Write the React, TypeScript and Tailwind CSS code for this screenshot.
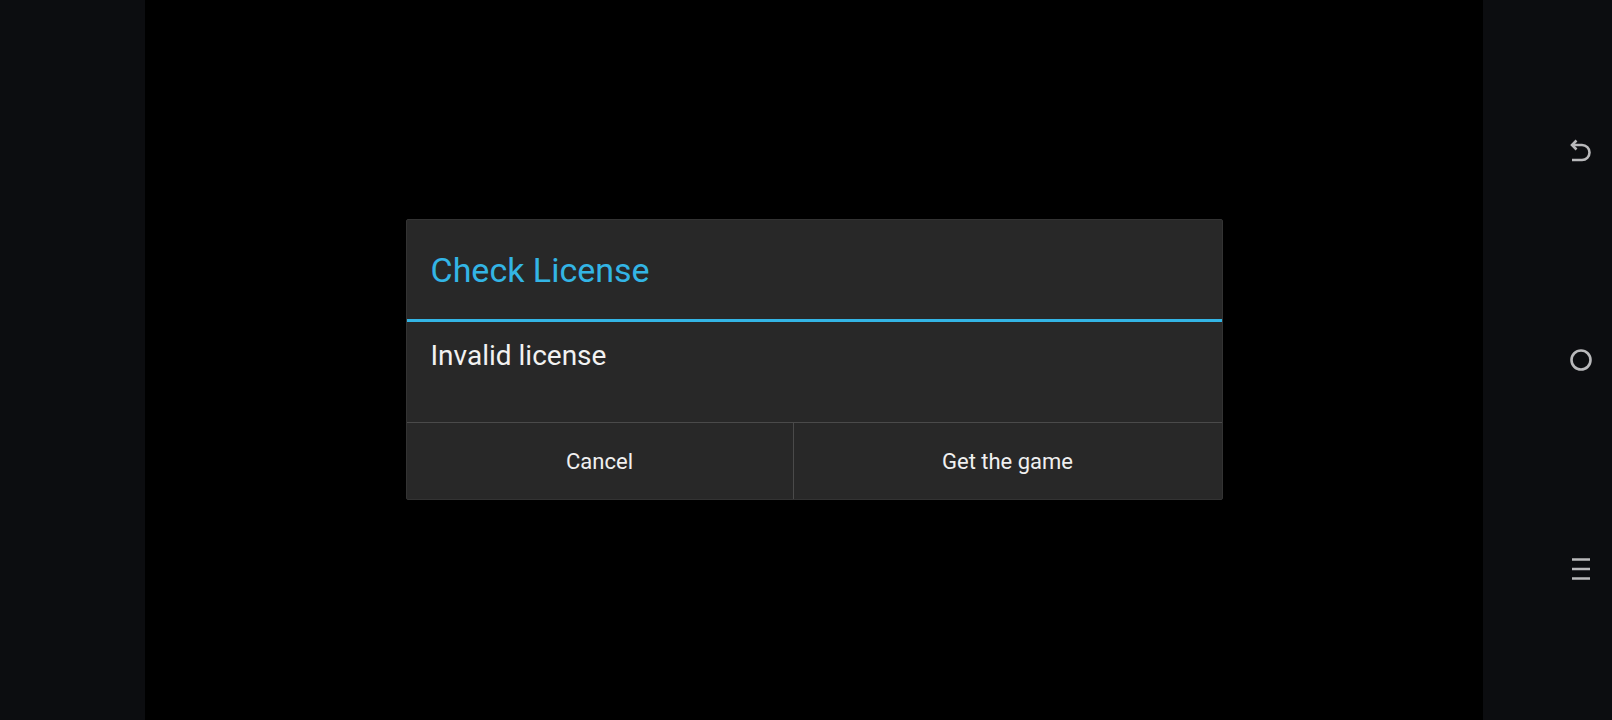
import React from "react";

const BackIcon = () => (
  <svg width="24" height="24" viewBox="0 0 24 24" fill="none" stroke="#b9b9bb" strokeWidth="2.6">
    <path d="M7.5 1.5 L3 6 L7.5 10.5" />
    <path d="M3.5 6 H13 a7.5 7.5 0 0 1 0 15 H3" />
  </svg>
);

const HomeIcon = () => (
  <svg width="24" height="24" viewBox="0 0 24 24" fill="none" stroke="#b9b9bb" strokeWidth="2.6">
    <circle cx="12" cy="12" r="9.5" />
  </svg>
);

const MenuIcon = () => (
  <svg width="24" height="24" viewBox="0 0 24 24" fill="none" stroke="#b9b9bb" strokeWidth="2.4">
    <path d="M3 2.5 H21 M3 12 H21 M3 21.5 H21" />
  </svg>
);

export default function App() {
  return (
    <div className="flex h-[720px] w-full bg-black font-['Roboto',sans-serif]">
      <aside className="w-[145px] shrink-0 bg-[#0c0d10]" />

      <main className="flex flex-1 items-center justify-center bg-black pb-[1px]">
        <div className="flex w-[817px] flex-col rounded-[2px] border border-[#333] bg-[#282828] shadow-[0_0_2px_rgba(0,0,0,0.8)]">
          <div className="flex h-[99px] items-center px-[24px]">
            <h1 className="text-[34px] leading-none text-[#33b5e5]">Check License</h1>
          </div>
          <div className="h-[3px] bg-[#33b5e5]" />
          <div className="h-[100px] px-[24px] pt-[20px]">
            <p className="text-[28px] leading-none text-[#f2f2f2]">Invalid license</p>
          </div>
          <div className="flex h-[77px] border-t border-[#4a4a4a]">
            <button className="flex w-[387px] shrink-0 items-center justify-center border-r border-[#4a4a4a] text-[22px] text-[#f0f0f0]">
              Cancel
            </button>
            <button className="flex flex-1 items-center justify-center text-[22px] text-[#f0f0f0]">
              Get the game
            </button>
          </div>
        </div>
      </main>

      <aside className="flex w-[129px] shrink-0 flex-col items-end justify-center gap-[185px] bg-[#0c0d10] pr-[19px]">
        <BackIcon />
        <HomeIcon />
        <MenuIcon />
      </aside>
    </div>
  );
}
